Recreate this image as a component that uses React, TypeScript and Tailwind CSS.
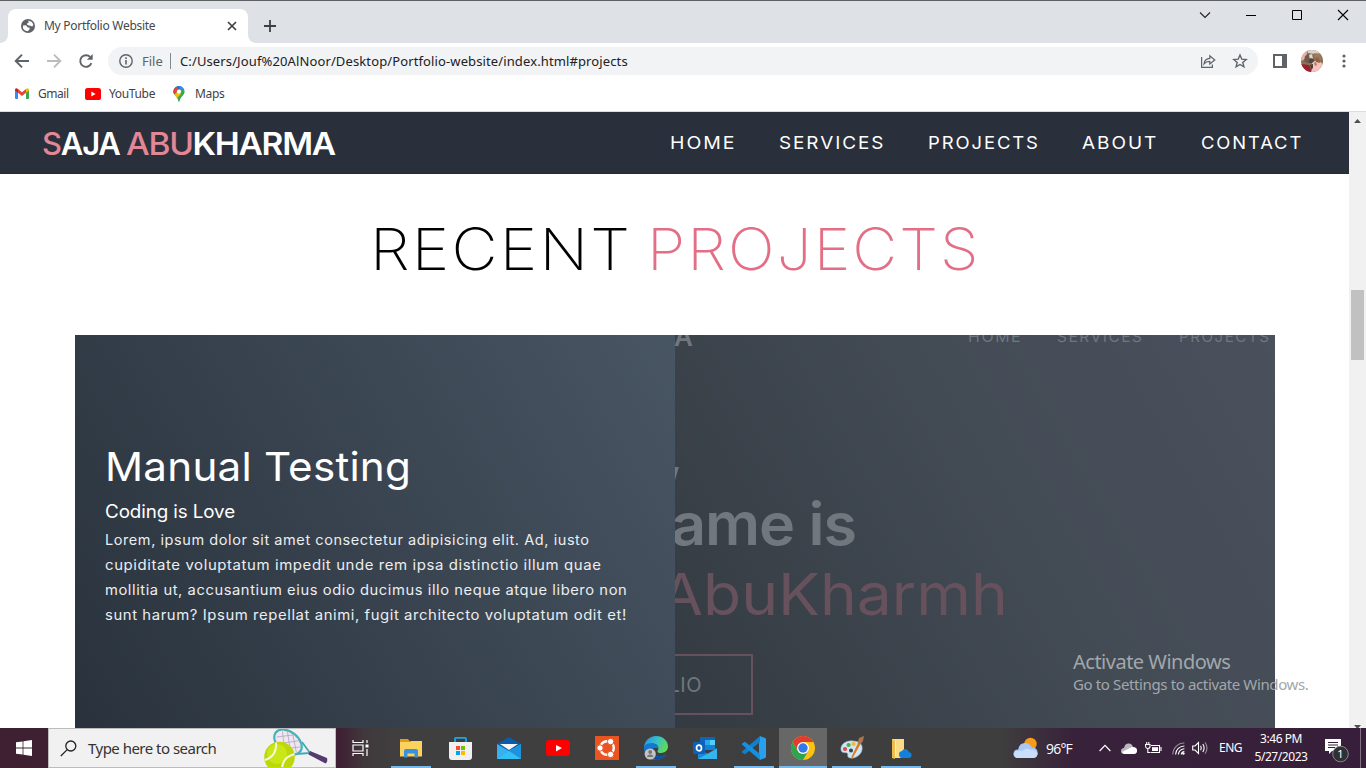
import React from "react";

const mont = "font-['Inter','Liberation_Sans',sans-serif]";

function GlobeIcon() {
  return (
    <svg width="14" height="14" viewBox="0 0 14 14">
      <circle cx="7" cy="7" r="7" fill="#5f6368" />
      <path d="M2 6.5 L5 6.3 L6.5 8.3 L8.8 8.8 L8.2 11 L6.4 12.3 L4 11.6 L2 9.5 Z" fill="#fff" />
      <path d="M7.2 1.6 L11 3 L12.4 6 L11.2 7.6 L8.4 6.4 L6.4 6 L6 4.4 L7.8 3.6 Z" fill="#fff" />
    </svg>
  );
}

function TabStrip() {
  return (
    <div className="flex h-[43px] border-t border-[#5f6063] bg-[#dee1e6]">
      <div className="flex h-full w-2 items-end bg-white">
        <div className="h-full w-full rounded-br-lg bg-[#dee1e6]" />
      </div>
      <div className="flex w-60 flex-col bg-[#dee1e6] pt-2">
        <div className="flex flex-1 items-center rounded-t-lg bg-white pr-[10px] pl-[13px]">
          <GlobeIcon />
          <span className="ml-[9px] flex-1 text-[12px] tracking-[-0.28px] text-[#45484c]">My Portfolio Website</span>
          <svg width="12" height="12" viewBox="0 0 12 12" stroke="#3c4043" strokeWidth="1.7">
            <path d="M2 2 L10 10 M10 2 L2 10" />
          </svg>
        </div>
      </div>
      <div className="flex h-full w-2 items-end bg-white">
        <div className="h-full w-full rounded-bl-lg bg-[#dee1e6]" />
      </div>
      <div className="pt-[19px] pl-2">
        <svg width="12" height="12" viewBox="0 0 12 12" stroke="#3c4043" strokeWidth="1.8">
          <path d="M6 0 V12 M0 6 H12" />
        </svg>
      </div>
      <div className="ml-auto flex gap-[34px] pt-[8px] pr-[17px]">
        <svg width="12" height="12" viewBox="0 0 12 12" fill="none" stroke="#222" strokeWidth="1.1">
          <path d="M1 3.5 L6 8.5 L11 3.5" />
        </svg>
        <svg width="12" height="12" viewBox="0 0 12 12" stroke="#000" strokeWidth="1">
          <path d="M1 6.5 H11" />
        </svg>
        <svg width="12" height="12" viewBox="0 0 12 12" fill="none" stroke="#000" strokeWidth="1">
          <path d="M1.5 1.5 H10.5 V10.5 H1.5 Z" />
        </svg>
        <svg width="12" height="12" viewBox="0 0 12 12" stroke="#000" strokeWidth="1.1">
          <path d="M1 1 L11 11 M11 1 L1 11" />
        </svg>
      </div>
    </div>
  );
}

function Toolbar() {
  return (
    <div className="flex h-9 items-center bg-white pl-[14px]">
      <svg width="16" height="16" viewBox="0 0 16 16" fill="none" stroke="#5f6368" strokeWidth="1.9">
        <path d="M15 8 H2 M8 1.7 L1.7 8 L8 14.3" />
      </svg>
      <svg className="ml-4" width="16" height="16" viewBox="0 0 16 16" fill="none" stroke="#babcbe" strokeWidth="1.9">
        <path d="M1 8 H14 M8 1.7 L14.3 8 L8 14.3" />
      </svg>
      <svg className="ml-4" width="16" height="16" viewBox="0 0 16 16" fill="none" stroke="#5f6368" strokeWidth="1.9">
        <path d="M13.4 10.2 A5.8 5.8 0 1 1 12.2 4" />
        <path d="M14.7 1 V6.8 H8.9 Z" fill="#5f6368" stroke="none" />
      </svg>
      <div className="ml-[14px] flex h-7 w-[1150px] items-center rounded-full bg-[#f1f3f4] pr-2.5 pl-[11px]">
        <svg width="14" height="14" viewBox="0 0 14 14" fill="none" stroke="#5f6368" strokeWidth="1.4">
          <circle cx="7" cy="7" r="6.2" />
          <path d="M7 6 V10.6 M7 3.3 V4.9" strokeWidth="1.6" />
        </svg>
        <span className="mt-[2px] ml-[9px] w-[27px] text-[13px] text-[#5f6368]">File</span>
        <div className="ml-px h-4 w-px bg-[#85888c]" />
        <span className="mt-[2px] ml-[9px] flex-1 text-[13px] tracking-[0.12px] text-[#202124]">
          C:/Users/Jouf%20AlNoor/Desktop/Portfolio-website/index.html#projects
        </span>
        <svg width="16" height="16" viewBox="0 0 16 16" fill="none" stroke="#5f6368" strokeWidth="1.2">
          <path d="M1.6 4 V14.4 H12.4 V11.6" />
          <path d="M4 11 C4.4 7.6 6.4 5.6 9.8 5.4 V2.8 L14.8 7 L9.8 11 V8.4 C7.4 8.4 5.6 9 4 11 Z" />
        </svg>
        <svg className="ml-4" width="16" height="16" viewBox="0 0 16 16" fill="none" stroke="#5f6368" strokeWidth="1.4">
          <path d="M8 2 L9.8 6.2 L14.2 6.6 L10.8 9.5 L11.9 13.8 L8 11.5 L4.1 13.8 L5.2 9.5 L1.8 6.6 L6.2 6.2 Z" />
        </svg>
      </div>
      <svg className="ml-[15px]" width="14" height="14" viewBox="0 0 14 14">
        <path d="M0 0 H14 V14 H0 Z" fill="#5f6368" />
        <path d="M2 2 H9 V12 H2 Z" fill="#fff" />
      </svg>
      <svg className="ml-[14px]" width="22" height="22" viewBox="0 0 22 22">
        <clipPath id="avatar">
          <circle cx="11" cy="11" r="11" />
        </clipPath>
        <g clipPath="url(#avatar)">
          <rect width="22" height="22" fill="#8a705c" />
          <path d="M0 0 H7 L4 9 L0 11 Z" fill="#f0b0a4" />
          <path d="M7 0 H22 V3 L14 4 L7 3 Z" fill="#d9d3cc" />
          <path d="M4 6 L8 4 L10 9 L6 13 L3 11 Z" fill="#6c5c50" />
          <path d="M8 5 L11 4 L12 9 L9 10 Z" fill="#e2d6c8" />
          <path d="M13 3 L19 4 L21 10 L17 9 L14 8 Z" fill="#a07a55" />
          <path d="M9 8 L13 9 L12 13 L7 13 Z" fill="#54463e" />
          <path d="M0 14 L8 15 L11 22 H0 Z" fill="#9c1f2c" />
          <path d="M11 13 L14 11 L19 12 L22 14 V22 H10 L12 17 Z" fill="#f6c3bc" />
          <path d="M15 7 L18 8 L19 13 L15 12 Z" fill="#8d6446" />
          <path d="M13 13 L15 12 L16 15 L14 16 Z" fill="#b37a68" />
          <path d="M9 15 L12 14 L12 18 L10 19 Z" fill="#4b3c3a" />
        </g>
      </svg>
      <svg className="ml-[19px]" width="4" height="14" viewBox="0 0 4 14" fill="#5f6368">
        <circle cx="2" cy="2" r="1.6" />
        <circle cx="2" cy="7" r="1.6" />
        <circle cx="2" cy="12" r="1.6" />
      </svg>
    </div>
  );
}

function Bookmarks() {
  return (
    <div className="flex h-[33px] items-center border-b border-[#dadce0] bg-white pb-[3px] pl-[15px] text-[12px] text-[#3f4246]">
      <svg width="14" height="11" viewBox="0 0 14 11">
        <path d="M0 1.4 L3 3.6 V11 H1 Q0 11 0 10 Z" fill="#4285f4" />
        <path d="M14 1.4 L11 3.6 V11 H13 Q14 11 14 10 Z" fill="#34a853" />
        <path d="M3 1 L7 4.2 L11 1 V4.8 L7 8 L3 4.8 Z" fill="#ea4335" />
        <path d="M0 1.4 Q0.8 -0.8 3 1 V4.8 L0 2.6 Z" fill="#c5221f" />
        <path d="M14 1.4 Q13.2 -0.8 11 1 V4.8 L14 2.6 Z" fill="#fbbc04" />
      </svg>
      <span className="ml-[9px] w-[31px] tracking-[-0.45px]">Gmail</span>
      <svg className="ml-4" width="16" height="12" viewBox="0 0 16 12">
        <rect width="16" height="12" rx="2.6" fill="#f00" />
        <path d="M6.3 3.4 L10.6 6 L6.3 8.6 Z" fill="#fff" />
      </svg>
      <span className="ml-2 w-[46px] tracking-[-0.35px]">YouTube</span>
      <svg className="ml-[18px]" width="12" height="16" viewBox="0 0 12 16">
        <clipPath id="pin">
          <path d="M6 0 A5.6 5.6 0 0 1 11.6 5.6 C11.6 9.6 7.4 10.6 6.6 15.2 Q6 16.4 5.4 15.2 C4.6 10.6 0.4 9.6 0.4 5.6 A5.6 5.6 0 0 1 6 0 Z" />
        </clipPath>
        <g clipPath="url(#pin)">
          <rect width="12" height="16" fill="#34a853" />
          <path d="M0 10 L9 0 H0 Z" fill="#1a73e8" />
          <path d="M0 0 H3 L6 4 L0 9 Z" fill="#ea4335" />
          <path d="M6 0 H12 V2 L8 4 Z" fill="#4285f4" />
          <path d="M0 10 L5 5 L8 8 L3 13 Z" fill="#fbbc04" />
        </g>
        <circle cx="6" cy="5.6" r="2.1" fill="#fff" />
      </svg>
      <span className="ml-[10px] tracking-[-0.35px]">Maps</span>
    </div>
  );
}

function SiteNav() {
  return (
    <div className={`${mont} flex h-[62px] items-center border-b border-[#232a3a] bg-[#29303b] text-white`}>
      <div className="mt-[2px] ml-[42px] flex w-[293px] text-[31px] leading-none font-semibold tracking-[-1.2px] whitespace-nowrap">
        <span className="w-[84px]">
          <span className="font-medium text-[#e28796]">S</span>AJA
        </span>
        <span className="inline-block origin-left scale-x-[1.08]">
          <span className="font-medium text-[#e28796]">ABU</span>KHARMA
        </span>
      </div>
      <div className="ml-[335px] flex text-[17.5px] leading-none tracking-[1.8px] whitespace-nowrap">
        <span className="w-[109px] origin-left scale-x-[1.11]">HOME</span>
        <span className="w-[148.5px] origin-left scale-x-[1.08]">SERVICES</span>
        <span className="w-[154px] origin-left scale-x-[1.055]">PROJECTS</span>
        <span className="w-[119px] origin-left scale-x-[1.085]">ABOUT</span>
        <span className="origin-left scale-x-[1.05]">CONTACT</span>
      </div>
    </div>
  );
}

function ProjectCard() {
  return (
    <div className={`${mont} mx-[75px] mt-[64px] flex h-[393px] w-[1200px] overflow-hidden`}>
      <div className="h-[405px] w-[600px] bg-[linear-gradient(60deg,#29323c_0%,#485563_100%)] pt-[108px] pl-[30px] text-white">
        <div className="h-[48px] w-[400px] origin-left scale-x-[1.055] text-[40px] leading-[48px] tracking-[0.2px]">Manual Testing</div>
        <div className="mt-[10px] h-[22px] w-[200px] origin-left scale-x-[1.045] text-[18px] leading-[22px] tracking-[-0.1px]">Coding is Love</div>
        <div className="mt-1 flex flex-col items-start text-[14px] leading-[25px] tracking-[0.55px] whitespace-nowrap text-[#eceef0]">
          <div className="origin-left scale-x-[1.036]">Lorem, ipsum dolor sit amet consectetur adipisicing elit. Ad, iusto</div>
          <div className="origin-left scale-x-[1.068]">cupiditate voluptatum impedit unde rem ipsa distinctio illum quae</div>
          <div className="origin-left scale-x-[1.051]">mollitia ut, accusantium eius odio ducimus illo neque atque libero non</div>
          <div className="origin-left scale-x-[1.061]">sunt harum? Ipsum repellat animi, fugit architecto voluptatum odit et!</div>
        </div>
      </div>
      <div className="relative h-[405px] w-[600px] overflow-hidden bg-[linear-gradient(60deg,#333a41_0%,#434b55_58%,#4a505c_100%)] leading-none whitespace-nowrap text-[#70777e]">
        <span className="absolute top-[-11px] left-[-1px] text-[26px] font-semibold">A</span>
        <span className="absolute top-[-6px] left-[293px] origin-left scale-x-[1.06] text-[15px] tracking-[1.5px]">HOME</span>
        <span className="absolute top-[-6px] left-[382px] origin-left scale-x-[1.03] text-[15px] tracking-[1.5px]">SERVICES</span>
        <span className="absolute top-[-6px] left-[504px] origin-left scale-x-[1.01] text-[15px] tracking-[1.5px]">PROJECTS</span>
        <span className="absolute top-[87px] left-[-11px] text-[60px] font-bold">,</span>
        <span className="absolute top-[160px] left-[-4px] origin-left scale-x-[1.055] text-[58px] font-semibold tracking-[-1px]">ame is</span>
        <span className="absolute top-[230px] left-[-15px] origin-left scale-x-[1.075] text-[58px] text-[#66515d]">AbuKharmh</span>
        <div className="absolute top-[319px] left-[-100px] flex h-[61px] w-[178px] items-center justify-end border-2 border-[#66515d] pr-[49px] text-[20px] tracking-[0.5px]">
          PORTFOLIO
        </div>
      </div>
    </div>
  );
}

function Scrollbar() {
  return (
    <div className="flex h-full w-[17px] flex-col items-center overflow-hidden bg-[#f1f1f1]">
      <svg width="17" height="17" viewBox="0 0 17 17">
        <path d="M5 11 L8.5 7 L12 11 Z" fill="#505050" />
      </svg>
      <div className="mt-[161px] h-[70px] w-[13px] bg-[#c1c1c1]" />
      <svg className="mt-auto -mb-px" width="17" height="4" viewBox="0 0 17 4">
        <path d="M5 0 H12 L8.5 4 Z" fill="#505050" />
      </svg>
    </div>
  );
}

function Task({ children, open, active }: { children: React.ReactNode; open?: boolean; active?: boolean }) {
  return (
    <div className={`flex h-10 w-12 shrink-0 flex-col items-center ${active ? "bg-[#666766]" : ""}`}>
      <div className="flex h-[38px] w-full items-center justify-center pt-[2px]">{children}</div>
      {active ? <div className="h-[2px] w-12 bg-[#76b9ed]" /> : open ? <div className="h-[2px] w-10 bg-[#76b9ed]" /> : null}
    </div>
  );
}

function TaskIcons() {
  return (
    <div className="ml-[3px] flex gap-px">
      <Task open>
        <svg width="24" height="24" viewBox="0 0 24 24">
          <path d="M1 3 H9 L11 5.5 H23 V20 H1 Z" fill="#e39c12" />
          <path d="M1 6 H11 L12 5 H23 V20.5 H1 Z" fill="#fcd25e" />
          <path d="M5 21.5 V15 Q5 13 7 13 H17 Q19 13 19 15 V21.5 H15.5 V17.5 H8.5 V21.5 Z" fill="#3a91dc" />
        </svg>
      </Task>
      <Task>
        <svg width="24" height="24" viewBox="0 0 24 24">
          <path d="M7 7 V2.6 Q7 1.8 7.8 1.8 H17.2 Q18 1.8 18 2.6 V7" fill="none" stroke="#1aa7e4" strokeWidth="1.8" />
          <path d="M1 6 H24 V21 Q24 24 21 24 H4 Q1 24 1 21 Z" fill="#f0f0f0" />
          <path d="M8 10 H12 V14 H8 Z" fill="#f25022" />
          <path d="M13 10 H17 V14 H13 Z" fill="#7fba00" />
          <path d="M8 15 H12 V19 H8 Z" fill="#00a4ef" />
          <path d="M13 15 H17 V19 H13 Z" fill="#ffb900" />
        </svg>
      </Task>
      <Task>
        <svg width="24" height="24" viewBox="0 0 24 24">
          <path d="M0 8 L12 1 L24 8 V16 H0 Z" fill="#0a5cab" />
          <path d="M0 8 L12 15 L24 8 V23 H0 Z" fill="#36b0ef" />
          <path d="M0 23 L24 8 V23 Z" fill="#1e93dc" />
          <path d="M0 23 L12 15 L24 23 Z" fill="#35c0f5" />
          <path d="M3 8 L21 8 L12 14 Z" fill="#f5f5f5" />
        </svg>
      </Task>
      <Task>
        <svg width="24" height="24" viewBox="0 0 24 24">
          <rect x="0" y="4" width="24" height="16" rx="3" fill="#f00" />
          <path d="M10 9 L16 12 L10 15.4 Z" fill="#fff" />
        </svg>
      </Task>
      <Task>
        <svg width="24" height="24" viewBox="0 0 24 24">
          <rect width="24" height="24" fill="#e95420" />
          <circle cx="12" cy="12" r="6.8" fill="none" stroke="#fff" strokeWidth="2.4" />
          <circle cx="5" cy="12" r="3.2" fill="#fff" stroke="#e95420" />
          <circle cx="15.6" cy="5.6" r="3.2" fill="#fff" stroke="#e95420" />
          <circle cx="15.6" cy="18.4" r="3.2" fill="#fff" stroke="#e95420" />
        </svg>
      </Task>
      <Task open>
        <svg width="24" height="24" viewBox="0 0 24 24">
          <defs>
            <linearGradient id="edge" x1="0" x2="1" y1="0.2" y2="0.6">
              <stop offset="0" stopColor="#2794e6" />
              <stop offset="0.5" stopColor="#35c1c8" />
              <stop offset="1" stopColor="#62dc50" />
            </linearGradient>
          </defs>
          <path d="M0 12 A12 12 0 0 1 12 0 C19 0 24 5 24 10.5 C24 15 20 17 16.5 17 C13.5 17 13 15.6 14 14 C15.5 11 13 7.5 9 7.5 C4 7.5 1 10 0 12 Z" fill="url(#edge)" />
          <path d="M0 12 C0 8 5 6.6 9 7.5 C13 8.4 15 10 14 12 L9.5 12 C7 14.5 9 20.5 15 20.5 C18 20.5 20 19.6 22.4 18 C20 22 16 24 12 24 A12 12 0 0 1 0 12 Z" fill="#1478d0" />
          <path d="M9 11.5 C6.5 15 9 21 15.5 20.6 C18.5 20.4 20.6 19.3 22.4 18 C20 22 16 24 12 24 C6 22 5 15 9 11.5 Z" fill="#0f4fa0" />
          <circle cx="6.2" cy="18" r="5.6" fill="#c4c4c4" />
          <circle cx="6.2" cy="16" r="1.9" fill="#777" />
          <path d="M3 21 Q3.2 18.5 6.2 18.5 Q9.2 18.5 9.4 21 Z" fill="#777" />
        </svg>
      </Task>
      <Task>
        <svg width="24" height="24" viewBox="0 0 24 24">
          <path d="M7 1 H22 V13 H7 Z" fill="#0f64b8" />
          <path d="M12 4 H17 V9 H12 Z" fill="#28a8ea" />
          <path d="M17 4 H22 V9 H17 Z" fill="#50d0f8" />
          <path d="M12 9 H22 V14 H12 Z" fill="#1580d4" />
          <path d="M5 12 L15 18 L24 12 V23 H5 Z" fill="#1888d8" />
          <path d="M5 23 L24 12.5 V23 Z" fill="#35b5ee" />
          <rect x="0" y="6" width="12" height="12" rx="1" fill="#0a62bc" />
          <ellipse cx="6" cy="12" rx="2.5" ry="2.9" fill="none" stroke="#fff" strokeWidth="1.7" />
        </svg>
      </Task>
      <Task open>
        <svg width="24" height="24" viewBox="0 0 24 24">
          <path d="M18 0 L24 2.5 V21.5 L18 24 L17 18 V6 Z" fill="#29a0ee" />
          <path d="M18 6 L3 18.3 L0 16.6 V15.4 L18 0 Z" fill="#1180cc" />
          <path d="M18 18 L3 5.7 L0 7.4 V8.6 L18 24 Z" fill="#1490df" />
        </svg>
      </Task>
      <Task active open>
        <svg width="24" height="24" viewBox="0 0 24 24">
          <circle cx="12" cy="12" r="12" fill="#fbc116" />
          <path d="M1.6 6 A12 12 0 0 1 22.4 6 H12 V12 L7 15 Z" fill="#e33b2e" />
          <path d="M1.6 6 A12 12 0 0 0 12 24 L17.2 15 L12 12 L6.8 15 Z" fill="#2da44e" />
          <circle cx="12" cy="12" r="6" fill="#fff" />
          <circle cx="12" cy="12" r="4.7" fill="#3478ea" />
        </svg>
      </Task>
      <Task open>
        <svg width="24" height="24" viewBox="0 0 24 24">
          <path d="M1 14 C0 8 7 4 13 5 C20 5 23 9 22 14 C21 19 15 23 10 22 C6 21 9 18 7 17 C5 16 2 18 1 14 Z" fill="#cfe6f5" stroke="#8fb4cc" strokeWidth="0.6" />
          <circle cx="5" cy="13" r="2.1" fill="#e04a44" />
          <circle cx="8.6" cy="9" r="2.1" fill="#4caf3f" />
          <circle cx="13.6" cy="8" r="2.1" fill="#f2b92a" />
          <circle cx="11" cy="14.5" r="2" fill="#32424e" />
          <path d="M12 23 L11.4 21 L18 7 L20.4 8.4 Z" fill="#e07a22" />
          <path d="M17.6 7.4 L19 2 L24 0 L23 5 L20.6 8.6 Z" fill="#a9784e" />
        </svg>
      </Task>
      <Task open>
        <svg width="24" height="24" viewBox="0 0 24 24">
          <path d="M3 3 H15 V22 H3 Z" fill="#fbdc84" />
          <path d="M3 3 L6 5 V23 L3 22 Z" fill="#eebc4e" />
          <path d="M6 5 H7 V20 H6 Z" fill="#fff0c0" />
          <path d="M10 18 Q10 15.5 13 15 Q15 11.8 18.4 14 Q20 15.2 20 16.2 Q22.6 16.4 22.6 19 Q22.6 22 20 22 H13 Q10 22 10 18 Z" fill="#1380dc" />
        </svg>
      </Task>
    </div>
  );
}

function Taskbar() {
  return (
    <div className="flex h-10 bg-[linear-gradient(90deg,#3f2032_0px,#3f2032_340px,#40393c_365px,#403f3f_400px,#3f3e3e_1000px,#38213a_1075px,#371f3b_1366px)] text-white">
      <div className="flex w-12 items-center justify-center">
        <svg width="16" height="16" viewBox="0 0 16 16" fill="#fff">
          <path d="M0 2.3 L6.6 1.4 V7.6 H0 Z M7.4 1.3 L16 0 V7.6 H7.4 Z M0 8.4 H6.6 V14.6 L0 13.7 Z M7.4 8.4 H16 V16 L7.4 14.7 Z" />
        </svg>
      </div>
      <div className="flex h-10 w-72 items-center overflow-hidden border border-[#bdbdbd] bg-[#f1f1f1] pl-[11px]">
        <svg width="17" height="17" viewBox="0 0 17 17" fill="none" stroke="#222" strokeWidth="1.3">
          <circle cx="10.8" cy="6" r="5" />
          <path d="M7.2 9.6 L0.8 16" />
        </svg>
        <span className="ml-[11px] w-[128px] text-[15px] tracking-[-0.52px] whitespace-nowrap text-[#333]">Type here to search</span>
        <svg className="ml-[48px]" width="66" height="38" viewBox="0 0 66 38">
          <path d="M33 25 L46 24 L38 13" fill="none" stroke="#43aab5" strokeWidth="1.8" />
          <path d="M46 22 L63 29 Q64 33 61.5 34.5 L44.5 25.5 Z" fill="#553a6e" />
          <g transform="rotate(38 24 13)">
            <ellipse cx="24" cy="13" rx="15.5" ry="10.2" fill="#eee7f0" stroke="#45b3bb" strokeWidth="2.2" />
            <path d="M13 8 L27 22 M17 5 L33 20 M23 4 L37 16 M12 16 L24 4 M17 21 L32 5 M24 22 L37 9" stroke="#b3a0bd" strokeWidth="0.7" />
          </g>
          <circle cx="15.5" cy="28" r="15.3" fill="#bdd80a" />
          <circle cx="13" cy="25" r="10" fill="#cae616" />
          <path d="M1 31 Q13 27 12 13.5" fill="none" stroke="#f4f8e4" strokeWidth="2" />
          <path d="M18 39 Q19 28 30.5 25" fill="none" stroke="#f4f8e4" strokeWidth="2" />
        </svg>
      </div>
      <div className="flex w-12 items-center justify-center">
        <svg width="17" height="16" viewBox="0 0 17 16" fill="none" stroke="#fff" strokeWidth="1.2">
          <path d="M1 0 V2.5 H11 V0 M1 16 V13.5 H11 V16 M1 5 H11 V11 H1 Z M15 0 V3 M15 9 V16" />
          <path d="M13.5 4.5 H16.5 V7.5 H13.5 Z" fill="#fff" stroke="none" />
        </svg>
      </div>
      <TaskIcons />
      <div className="ml-[88px] flex items-center text-[12px] whitespace-nowrap">
        <svg width="26" height="22" viewBox="0 0 26 22">
          <circle cx="17.5" cy="7" r="6.2" fill="#f79b1b" />
          <path d="M5 21 Q0.6 21 0.6 16.6 Q0.6 12.4 5.2 12.4 Q6.4 6 12 6 Q17 6 18.6 10.6 Q24.6 10.6 24.6 16 Q24.6 21 19.6 21 Z" fill="#a9c8f6" />
          <path d="M5 21 Q0.6 21 0.6 16.6 Q4 12 9 14 Q14 10 18 13 Q22 12 24.6 16 Q24.6 21 19.6 21 Z" fill="#c9dffc" />
        </svg>
        <span className="ml-[7px] w-[28px] font-['Open_Sans',sans-serif] text-[14px] tracking-[-0.8px]">96°F</span>
        <svg className="ml-[25px]" width="12" height="8" viewBox="0 0 12 8" fill="none" stroke="#fff" strokeWidth="1.2">
          <path d="M0.6 7 L6 1.4 L11.4 7" />
        </svg>
        <svg className="ml-[10px]" width="16" height="11" viewBox="0 0 16 11">
          <path d="M3 11 Q0 11 0 8 Q0 5.4 3 5 Q4 0.4 8 0.6 Q11 0.8 12 4 Q16 4.2 16 7.6 Q16 11 12.6 11 Z" fill="#bbb6bd" />
          <path d="M3 11 L1 9 L9 5 Q11 3.6 13 4.2 Q16 4.8 16 7.6 Q16 11 12.6 11 Z" fill="#fff" />
        </svg>
        <svg className="ml-[8px]" width="17" height="13" viewBox="0 0 17 13" fill="none" stroke="#fff" strokeWidth="1.1">
          <path d="M6 3.5 H14.5 V10.5 H5.5 M16 5 V9 M3.8 0 V2 M1.7 0 V2 M0.5 2.5 H5 V5 Q4.5 6.5 2.8 6.5 Q1 6.5 0.7 5 Z M2.8 6.5 V10.5 H5" />
          <path d="M7 5.2 H13 V9 H7 Z" fill="#fff" stroke="none" />
        </svg>
        <svg className="ml-[10px]" width="13" height="13" viewBox="0 0 13 13" fill="none" stroke="#fff" strokeWidth="1.1">
          <path d="M0.8 12.5 A11.5 11.5 0 0 1 12.4 1" stroke="#9a8c9c" />
          <path d="M3.6 12.5 A8.8 8.8 0 0 1 12.4 4" />
          <path d="M6.4 12.5 A6 6 0 0 1 12.4 6.8" />
          <path d="M9.2 12.5 A3.4 3.4 0 0 1 12.4 9.6" />
          <circle cx="11.4" cy="11.6" r="1.2" fill="#fff" stroke="none" />
        </svg>
        <svg className="ml-[7px]" width="17" height="14" viewBox="0 0 17 14" fill="none" stroke="#fff" strokeWidth="1.1">
          <path d="M0.7 5 H3 L6.5 1.6 V12.4 L3 9 H0.7 Z" />
          <path d="M8.6 4.8 Q10 7 8.6 9.2 M10.8 3 Q13.4 7 10.8 11" />
          <path d="M13 1.2 Q17 7 13 12.8" stroke="#9a8c9c" />
        </svg>
        <span className="ml-[10px] w-6 tracking-[-0.5px]">ENG</span>
        <div className="ml-[9px] flex w-[58px] flex-col items-center text-[12px] leading-[18px] tracking-[-0.45px]">
          <span>3:46 PM</span>
          <span>5/27/2023</span>
        </div>
        <svg className="mt-[6px] ml-[14px]" width="26" height="26" viewBox="0 0 26 26">
          <path d="M1 1 H17 V13 H8 L5 16 V13 H1 Z" fill="#fff" />
          <path d="M4 4.5 H14 M4 7 H14 M4 9.5 H11" stroke="#38203b" strokeWidth="1" />
          <circle cx="16.5" cy="16" r="7.8" fill="#303034" stroke="#8a8490" />
          <text x="16.5" y="20" fontSize="11" fill="#fff" textAnchor="middle">1</text>
        </svg>
        <div className="ml-[10px] h-10 w-px bg-[#80717f]" />
      </div>
    </div>
  );
}

export default function App() {
  return (
    <div className="relative flex h-[768px] w-[1366px] flex-col overflow-hidden bg-white font-['Noto_Sans','Open_Sans',sans-serif]">
      <TabStrip />
      <Toolbar />
      <Bookmarks />
      <div className="flex h-[616px]">
        <div className="h-full w-[1349px] overflow-hidden bg-white">
          <SiteNav />
          <h1 className={`${mont} mt-[47px] flex h-[50px] pl-[370px] text-[58px] leading-[56px] font-extralight tracking-[2px] whitespace-nowrap text-black`}>
            <span className="w-[277px] origin-left scale-x-[1.095]">RECENT</span>
            <span className="origin-left scale-x-[1.066] text-[#e36f86]">PROJECTS</span>
          </h1>
          <ProjectCard />
        </div>
        <Scrollbar />
      </div>
      <Taskbar />
      <div className="absolute top-[649px] left-[1073px] whitespace-nowrap text-[#a3a7ab]">
        <div className="text-[20px] leading-[25px] tracking-[-0.5px]">Activate Windows</div>
        <div className="text-[15px] leading-[20px] tracking-[-0.37px]">Go to Settings to activate Windows.</div>
      </div>
    </div>
  );
}
